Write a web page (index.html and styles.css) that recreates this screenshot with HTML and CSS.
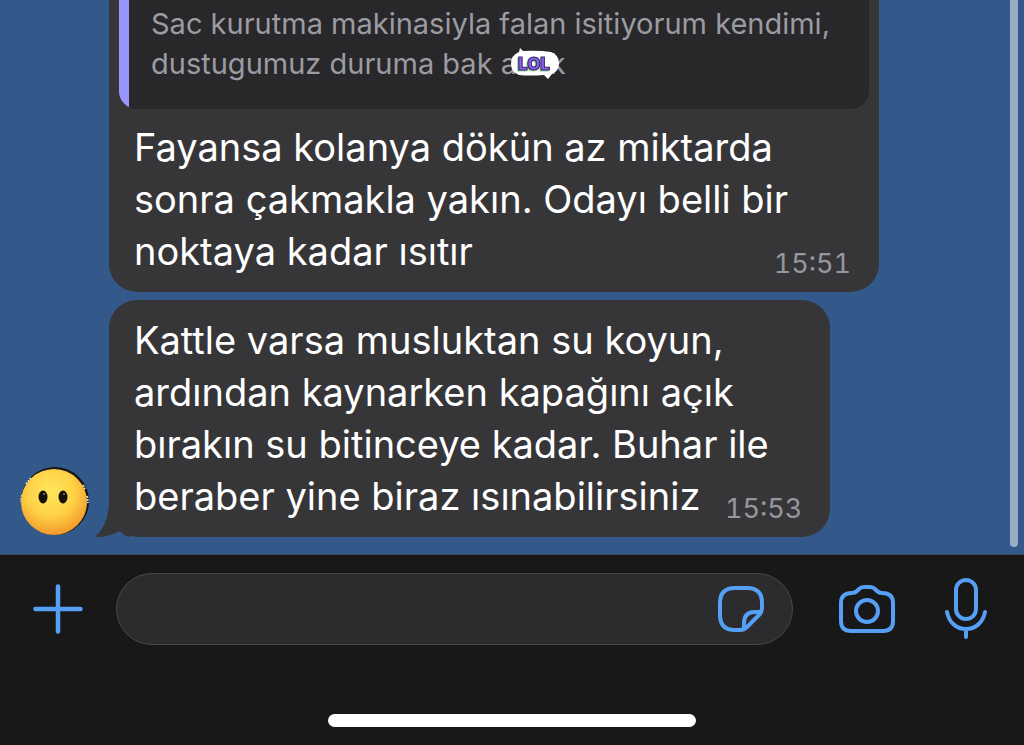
FILE: index.html
```
<!DOCTYPE html>
<html lang="tr">
<head>
<meta charset="utf-8">
<meta name="viewport" content="width=device-width, initial-scale=1">
<title>Sohbet</title>
<link rel="stylesheet" href="styles.css">
</head>
<body>
<main class="chat">
  <article class="bubble bubble-reply">
    <blockquote class="quote">
      <p class="quote-text">Sac kurutma makinasiyla falan isitiyorum kendimi,<br>dustugumuz duruma bak <span class="covered">a&nbsp;&nbsp;&nbsp;&nbsp;k<svg class="lol" viewBox="0 0 50 34" role="img" aria-label="LOL">
        <path d="M9 5 L10 1 L13 4 Q28 3 41 5 Q49 8 49 16 Q49 24 42 27 L38 32 L34 28 Q20 29 9 28 Q1 25 1 17 Q1 8 9 5Z" fill="#fff"/>
        <text class="lol-text" x="8" y="23">LOL</text>
      </svg></span></p>
    </blockquote>
    <p class="message">Fayansa kolanya dökün az miktarda<br>sonra çakmakla yakın. Odayı belli bir<br>noktaya kadar ısıtır</p>
    <time class="time" datetime="15:51">15:51</time>
  </article>
  <div class="row">
    <svg class="avatar" viewBox="0 -2 72 72" aria-hidden="true">
      <defs>
        <radialGradient id="face" cx="45%" cy="35%" r="65%">
          <stop offset="0" stop-color="#ffe65c"/>
          <stop offset=".55" stop-color="#ffd246"/>
          <stop offset="1" stop-color="#f29a2c"/>
        </radialGradient>
      </defs>
      <circle cx="37" cy="34" r="34" fill="#171717"/>
      <path d="M4 28 L3 35 M13 11 L8 17 M65 18 L67 22 M69 29 L70 36" stroke="#d8d8d8" stroke-width="2" stroke-dasharray="2 1"/>
      <circle cx="36" cy="35" r="33" fill="url(#face)"/>
      <ellipse cx="25" cy="30" rx="4.500" ry="6.500" fill="#171008"/>
      <ellipse cx="45" cy="30" rx="4.500" ry="6.500" fill="#171008"/>
      <circle cx="26" cy="27" r="1" fill="#8b7a55"/>
      <circle cx="46" cy="27" r="1" fill="#8b7a55"/>
    </svg>
    <article class="bubble bubble-last">
      <svg class="tail" viewBox="0 0 34 38" aria-hidden="true"><path d="M14 2Q14 24 0 37Q14 37 25 31Q29 36 34 37V2Z" fill="#363638"/></svg>
      <p class="message">Kattle varsa musluktan su koyun,<br>ardından kaynarken kapağını açık<br>bırakın su bitinceye kadar. Buhar ile<br>beraber yine biraz ısınabilirsiniz</p>
      <time class="time" datetime="15:53">15:53</time>
    </article>
  </div>
  <div class="scrollbar"></div>
</main>
<footer class="bar">
  <form class="composer">
    <button class="icon-button plus" type="button" aria-label="Ekle">
      <svg viewBox="0 0 50 50"><path d="M25 2.500V47.500M2.500 25H47.500" stroke-width="4.500"/></svg>
    </button>
    <div class="field">
      <input class="input" type="text" aria-label="Mesaj">
      <button class="icon-button sticker" type="button" aria-label="Çıkartma">
        <svg viewBox="0 0 46 46"><path d="M17 2H29Q44 2 44 17V22Q44 26 41 29L29 41Q26 44 22 44H17Q2 44 2 29V17Q2 2 17 2ZM26 43V37Q26 26 37 26H43"/></svg>
      </button>
    </div>
    <button class="icon-button camera" type="button" aria-label="Kamera">
      <svg viewBox="0 0 56 48"><path d="M13 8Q16 8 18 6L20 4Q22 2 25 2H31Q34 2 36 4L38 6Q40 8 43 8Q54 8 54 18V36Q54 46 44 46H12Q2 46 2 36V18Q2 8 13 8Z"/><circle cx="28" cy="26" r="11"/></svg>
    </button>
    <button class="icon-button mic" type="button" aria-label="Ses kaydı">
      <svg viewBox="0 0 42 62"><rect x="11" y="2" width="20" height="39" rx="10"/><path d="M2 34C4 45 12 51 21 51S38 45 40 34M21 51V59"/></svg>
    </button>
  </form>
  <div class="home"></div>
</footer>
</body>
</html>
```
FILE: styles.css
```
* {
  box-sizing: border-box;
}

body {
  margin: 0;
  min-height: 100vh;
  display: flex;
  flex-direction: column;
  background: #181818;
  color: #fff;
  font-family: Inter, "Liberation Sans", sans-serif;
}

p,
blockquote {
  margin: 0;
}

.chat {
  position: relative;
  flex: 1;
  display: flex;
  flex-direction: column;
  gap: 8px;
  padding-bottom: 17px;
  background: #33598b;
  border-bottom: 1px solid #3b4656;
}

.bubble {
  position: relative;
  background: #363638;
  border-radius: 28px;
}

.bubble-reply {
  width: 75.2%;
  margin-left: 109px;
  border-radius: 0 0 28px 28px;
}

.quote {
  margin: 0 10px 12px;
  padding: 4px 0 25px 32px;
  border-radius: 0 0 18px 18px;
  background: linear-gradient(to right, #9796ff 10px, #28282a 10px);
}

.quote-text {
  font-size: 29px;
  line-height: 40px;
  color: #9c9ba2;
  white-space: nowrap;
}

.covered {
  position: relative;
}

.lol {
  position: absolute;
  left: 9px;
  top: 1px;
  width: 50px;
  height: 34px;
}

.lol-text {
  font: 900 17px Inter, sans-serif;
  fill: #8a5cf0;
  stroke: #37265f;
  stroke-width: 1px;
  filter: drop-shadow(-1px 1px 0 #8fd0a0);
}

.message {
  padding: 0 25px 15px;
  font-size: 38px;
  line-height: 52px;
  white-space: nowrap;
}

.time {
  position: absolute;
  right: 28px;
  bottom: 12px;
  font-size: 27px;
  line-height: 32px;
  font-variant-numeric: tabular-nums;
  color: #97969d;
}

.row {
  display: flex;
  align-items: flex-end;
  padding-left: 18px;
  gap: 19px;
}

.avatar {
  flex: none;
  width: 72px;
  height: 72px;
}

.bubble-last {
  width: 71.7%;
  padding-top: 14px;
}

.tail {
  position: absolute;
  left: -14px;
  bottom: -1px;
  width: 34px;
  height: 38px;
}

.scrollbar {
  position: absolute;
  top: 0;
  right: 6px;
  bottom: 7px;
  width: 8px;
  border-radius: 0 0 4px 4px;
  background: #9badc6;
}

.bar {
  display: flex;
  flex-direction: column;
  align-items: center;
  gap: 69px;
  padding: 18px 0;
}

.composer {
  align-self: stretch;
  display: flex;
  align-items: center;
  padding: 0 37px 0 33px;
}

.field {
  flex: 1;
  display: flex;
  align-items: center;
  height: 72px;
  margin: 0 46px 0 33px;
  padding: 0 28px;
  border: 1px solid #48484a;
  border-radius: 36px;
  background: #2c2c2e;
}

.input {
  flex: 1;
  min-width: 0;
  border: 0;
  outline: 0;
  background: none;
  color: #fff;
  font: 32px Inter, sans-serif;
}

.icon-button {
  flex: none;
  padding: 0;
  border: 0;
  background: none;
}

.icon-button svg {
  display: block;
  width: 100%;
  height: 100%;
  fill: none;
  stroke: #559ff5;
  stroke-width: 4px;
  stroke-linecap: round;
  stroke-linejoin: round;
}

.plus {
  width: 50px;
  height: 50px;
}

.sticker {
  width: 46px;
  height: 46px;
}

.camera {
  width: 56px;
  height: 48px;
  margin-right: 50px;
}

.mic {
  width: 42px;
  height: 62px;
}

.home {
  width: 36%;
  height: 13px;
  border-radius: 7px;
  background: #fff;
}
```
